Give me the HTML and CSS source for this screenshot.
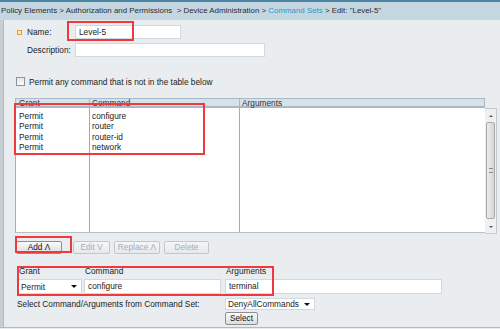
FILE: index.html
```html
<!DOCTYPE html>
<html lang="en">
<head>
    <meta charset="UTF-8">
    <title>Edit: "Level-5"</title>
    <link rel="stylesheet" href="styles.css">
</head>
<body>

<div class="topline"></div>
<div class="crumbs">
    Policy Elements &gt; Authorization and Permissions &nbsp;&gt; Device Administration &gt;
    <span class="crumb-link">Command Sets</span> &gt; Edit: "Level-5"
</div>

<div class="main">
    <div class="leftbar"></div>
    <div class="content">

        <div class="field-row">
            <span class="req"></span>
            <span class="label">Name:</span>
            <div class="textbox name-box">Level-5</div>
        </div>
        <div class="field-row desc-row">
            <span class="label">Description:</span>
            <div class="textbox desc-box"></div>
        </div>

        <div class="check-row">
            <span class="checkbox"></span>
            <span>Permit any command that is not in the table below</span>
        </div>

        <!-- command table -->
        <div class="grid">
            <div class="grid-head">
                <div class="col-grant">Grant</div>
                <div class="col-cmd">Command</div>
                <div class="col-args">Arguments</div>
            </div>
            <div class="grid-main">
                <div class="grid-body">
                    <div class="col-grant">
                        <div class="cell">Permit</div>
                        <div class="cell">Permit</div>
                        <div class="cell">Permit</div>
                        <div class="cell">Permit</div>
                    </div>
                    <div class="col-cmd">
                        <div class="cell">configure</div>
                        <div class="cell">router</div>
                        <div class="cell">router-id</div>
                        <div class="cell">network</div>
                    </div>
                    <div class="col-args"></div>
                </div>
                <div class="scrollbar">
                    <div class="sb-arrow"><span class="tri-up"></span></div>
                    <div class="sb-track">
                        <div class="sb-thumb"><span class="grip"></span></div>
                    </div>
                    <div class="sb-arrow"><span class="tri-down"></span></div>
                </div>
            </div>
        </div>

        <div class="btn-row">
            <button class="btn btn-add">Add &Lambda;</button>
            <button class="btn btn-off btn-edit">Edit V</button>
            <button class="btn btn-off btn-replace">Replace &Lambda;</button>
            <button class="btn btn-off btn-delete">Delete</button>
        </div>

        <!-- entry form -->
        <div class="entry">
            <div class="entry-label">Grant</div>
            <div class="entry-label">Command</div>
            <div class="entry-label">Arguments</div>

            <div class="dropdown"><span>Permit</span><span class="tri-down dark"></span></div>
            <div class="textbox entry-box">configure</div>
            <div class="textbox entry-box">terminal</div>

            <div class="set-label">Select Command/Arguments from Command Set:</div>
            <div class="dropdown set-drop"><span>DenyAllCommands</span><span class="tri-down dark"></span></div>

            <div class="btn-cell"><button class="btn btn-select">Select</button></div>
        </div>
    </div>
</div>
<div class="bottomline"></div>

<!-- highlight marks drawn over the screenshot -->
<div class="mark mark-name"></div>
<div class="mark mark-table"></div>
<div class="mark mark-add"></div>
<div class="mark mark-entry"></div>

</body>
</html>
```

FILE: styles.css
```css
body {
    margin: 0;
    background-color: #e9edf0;
    font-family: "Liberation Sans", Arial, sans-serif;
    font-size: 8.3px;
    color: #222;
    width: 500px;
    height: 329px;
    overflow: hidden;
    position: relative;
}
.topline {
    height: 2px;
    background-color: #4c84a3;
}
.crumbs {
    height: 18px;
    line-height: 18px;
    padding-left: 1px;
    font-size: 7.9px;
    background-color: #c4d7e1;
    color: #2b2b2b;
    white-space: nowrap;
}
.crumb-link {
    color: #2f94c8;
}
.main {
    display: flex;
    height: 307px;
}
.leftbar {
    width: 3px;
    background-color: #c7ced4;
    border-right: 1px solid #b4bcc3;
}
.content {
    flex: 1;
    padding: 5px 0 0 11px;
}

/* name / description */
.field-row {
    display: flex;
    align-items: center;
    height: 14px;
}
.req {
    width: 3px;
    height: 3px;
    margin: 0 5px 0 2px;
    border: 1px solid #f29a1f;
    background-color: #fde7b8;
}
.label {
    width: 48px;
}
.desc-row {
    margin-top: 4px;
    padding-left: 12px;
}
.textbox {
    box-sizing: border-box;
    height: 14px;
    line-height: 12px;
    padding-left: 3px;
    background-color: #fff;
    border: 1px solid #d3d8dc;
}
.name-box {
    width: 106px;
}
.desc-box {
    width: 190px;
}

.check-row {
    display: flex;
    align-items: center;
    height: 11px;
    margin: 19px 0 0 1px;
}
.checkbox {
    box-sizing: border-box;
    width: 9px;
    height: 9px;
    margin-right: 4px;
    border: 1px solid #8d9499;
    background: linear-gradient(#e4e6e8, #fafafa);
}

/* command table */
.grid {
    margin-top: 11px;
    width: 482px;
}
.grid-head {
    display: flex;
    box-sizing: border-box;
    width: 470px;
    height: 10px;
    line-height: 9px;
    background-color: #d7e1e8;
    border: 1px solid #a9bac6;
    border-bottom-width: 2px;
    color: #333;
}
.col-grant,
.col-cmd,
.col-args {
    box-sizing: border-box;
}
.col-grant {
    width: 73px;
    padding-left: 3px;
}
.col-cmd {
    width: 150px;
    padding-left: 2px;
    border-left: 1px solid #a9a9a9;
}
.col-args {
    flex: 1;
    padding-left: 2px;
    border-left: 1px solid #a9a9a9;
}
.grid-head .col-cmd,
.grid-head .col-args {
    border-left-color: #a9bac6;
}
.grid-main {
    display: flex;
}
.grid-body {
    display: flex;
    box-sizing: border-box;
    width: 470px;
    height: 125px;
    background-color: #fff;
    border-left: 1px solid #a6adb3;
    border-bottom: 1px solid #b9c0c5;
}
.grid-body .col-grant,
.grid-body .col-cmd {
    padding-top: 3px;
}
.cell {
    height: 10.3px;
    line-height: 10.3px;
}
.scrollbar {
    box-sizing: border-box;
    width: 12px;
    height: 126px;
    display: flex;
    flex-direction: column;
    background-color: #eef0f1;
    border: 1px solid #c3cbd1;
    border-left: none;
}
.sb-arrow {
    height: 13px;
    display: flex;
    align-items: center;
    justify-content: center;
}
.sb-track {
    flex: 1;
    display: flex;
    flex-direction: column;
}
.sb-thumb {
    box-sizing: border-box;
    height: 97px;
    margin: 0 1px;
    display: flex;
    align-items: center;
    justify-content: center;
    background: linear-gradient(90deg, #ececec, #d6d6d6);
    border: 1px solid #a9a9a9;
    border-radius: 2px;
}
.grip {
    width: 4px;
    height: 3px;
    border-top: 1px solid #8a8a8a;
    border-bottom: 1px solid #8a8a8a;
}
.tri-up {
    width: 0;
    height: 0;
    border-left: 2px solid transparent;
    border-right: 2px solid transparent;
    border-bottom: 2px solid #555;
}
.tri-down {
    width: 0;
    height: 0;
    border-left: 2px solid transparent;
    border-right: 2px solid transparent;
    border-top: 2px solid #555;
}
.tri-down.dark {
    border-left-width: 3px;
    border-right-width: 3px;
    border-top: 3px solid #111;
}

/* buttons */
.btn-row {
    display: flex;
    gap: 4px;
    margin: 7px 0 0 1px;
}
.btn {
    box-sizing: border-box;
    height: 13px;
    padding: 0;
    font-family: inherit;
    font-size: 8.3px;
    line-height: 11px;
    color: #111;
    background: linear-gradient(#fbfbfb, #d9dbdd);
    border: 1px solid #8a8e92;
    border-radius: 2px;
}
.btn-off {
    color: #a9aeb3;
    background: linear-gradient(#f4f5f6, #e6e9eb);
    border-color: #c2c7cb;
}
.btn-add {
    width: 46px;
    margin-right: 7px;
}
.btn-edit {
    width: 37px;
}
.btn-replace {
    width: 46px;
}
.btn-delete {
    width: 45px;
}

/* entry form */
.entry {
    display: grid;
    grid-template-columns: 64px 139px 217px;
    grid-template-rows: 11px 15px 14px 13px;
    column-gap: 2px;
    row-gap: 2px;
    margin: 12px 0 0 3px;
}
.entry-label {
    line-height: 10px;
    padding-left: 1px;
}
.dropdown {
    box-sizing: border-box;
    display: flex;
    align-items: center;
    justify-content: space-between;
    padding: 0 4px 0 2px;
    background-color: #fff;
    border: 1px solid #d3d8dc;
}
.entry-box {
    height: 15px;
    line-height: 13px;
    width: 137px;
}
.entry-box:nth-child(6) {
    width: 217px;
}
.set-label {
    grid-column: 1 / 3;
    margin-left: -1px;
    line-height: 16px;
}
.set-drop {
    width: 90px;
    height: 12px;
    margin-top: 2px;
}
.btn-cell {
    grid-column: 3;
}
.btn-select {
    width: 33px;
    height: 13px;
}
.bottomline {
    position: absolute;
    left: 0;
    top: 327px;
    width: 500px;
    height: 1px;
    background-color: #b2b9bf;
}

/* red highlight frames over the content */
.mark {
    position: absolute;
    box-sizing: border-box;
    border: 2px solid #ee3a3e;
}
.mark-name {
    left: 67px;
    top: 21px;
    width: 67px;
    height: 20px;
}
.mark-table {
    left: 14px;
    top: 103px;
    width: 191px;
    height: 52px;
}
.mark-add {
    left: 15px;
    top: 236px;
    width: 57px;
    height: 17px;
}
.mark-entry {
    left: 17px;
    top: 266px;
    width: 257px;
    height: 30px;
}
```
